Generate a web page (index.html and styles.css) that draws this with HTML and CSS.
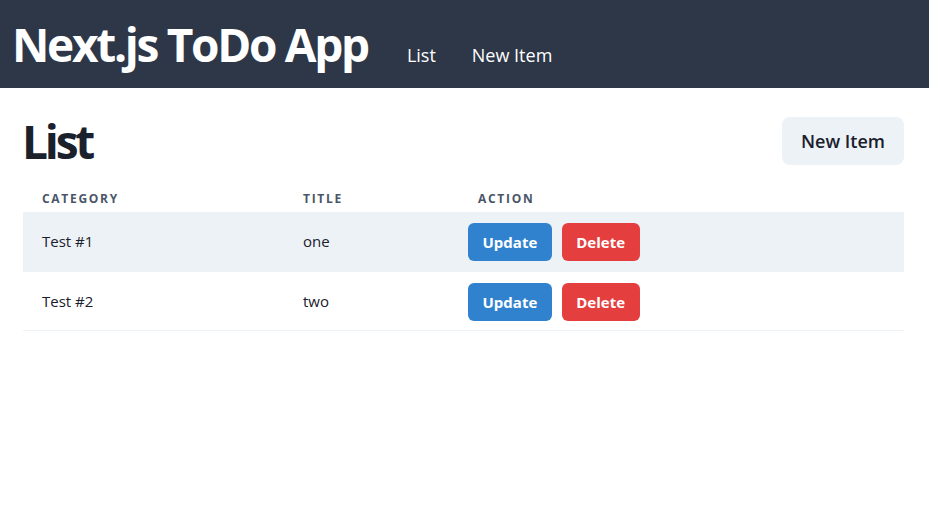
FILE: index.html
```html
<!DOCTYPE html>
<html lang="en">
<head>
<meta charset="utf-8">
<title>Next.js ToDo App</title>
<link rel="stylesheet" href="styles.css">
</head>
<body>
<header class="topbar">
  <h1 class="brand">Next.js ToDo App</h1>
  <nav class="nav">
    <a class="nav-link" href="#">List</a>
    <a class="nav-link" href="#">New Item</a>
  </nav>
</header>
<main class="main">
  <div class="page-head">
    <h2 class="page-title">List</h2>
    <button class="btn btn-gray">New Item</button>
  </div>
  <table class="table">
    <colgroup>
      <col class="col-cat">
      <col class="col-title">
      <col>
    </colgroup>
    <thead>
      <tr>
        <th>Category</th>
        <th>Title</th>
        <th>Action</th>
      </tr>
    </thead>
    <tbody>
      <tr class="striped">
        <td>Test #1</td>
        <td>one</td>
        <td class="actions"><button class="btn btn-blue">Update</button><button class="btn btn-red">Delete</button></td>
      </tr>
      <tr>
        <td>Test #2</td>
        <td>two</td>
        <td class="actions"><button class="btn btn-blue">Update</button><button class="btn btn-red">Delete</button></td>
      </tr>
    </tbody>
  </table>
</main>
</body>
</html>
```
FILE: styles.css
```css
* { box-sizing: border-box; }
body {
  margin: 0;
  font-family: "Open Sans", "Noto Sans", sans-serif;
  color: #1A202C;
  background: #fff;
}
.topbar {
  height: 88px;
  background: #2D3748;
  display: flex;
  align-items: baseline;
  padding: 14px 12px 0 12px;
}
.brand {
  margin: 0;
  font-size: 46px;
  font-weight: 700;
  line-height: 60px;
  color: #fff;
  letter-spacing: -2.3px;
}
.nav {
  display: flex;
  gap: 36px;
  margin-left: 39px;
}
.nav-link {
  color: #fff;
  text-decoration: none;
  font-size: 18px;
}
.main {
  padding: 29px 25px 0 23px;
}
.page-head {
  display: flex;
  justify-content: space-between;
  align-items: center;
  height: 48px;
  margin-bottom: 7px;
}
.page-title {
  margin: 0 0 0 -1px;
  font-size: 46px;
  font-weight: 700;
  line-height: 48px;
  letter-spacing: -3.2px;
}
.btn {
  border: none;
  font-family: inherit;
  cursor: pointer;
}
.btn-gray {
  height: 48px;
  padding: 0 19px;
  background: #EDF2F7;
  color: #1A202C;
  font-size: 18px;
  font-weight: 600;
  border-radius: 8px;
}
.table {
  width: 100%;
  border-collapse: collapse;
}
.col-cat { width: 261px; }
.col-title { width: 175px; }
.table th {
  text-align: left;
  font-size: 12px;
  font-weight: 700;
  letter-spacing: 1.7px;
  text-transform: uppercase;
  color: #4A5568;
  padding: 19px 19px 5px;
  line-height: 16px;
}
.table td {
  height: 59px;
  padding: 0 19px;
  font-size: 15px;
  border-bottom: 1px solid #EDF2F7;
}
.striped td { background: #EDF2F7; }
.table td.actions { padding-left: 9px; }
.actions .btn {
  height: 38px;
  padding: 0 14.5px;
  border-radius: 6px;
  color: #fff;
  font-size: 15px;
  font-weight: 700;
  margin-right: 10px;
  vertical-align: middle;
  position: relative;
  top: 1px;
}
.btn-blue { background: #3182CE; }
.btn-red { background: #E53E3E; }
```
